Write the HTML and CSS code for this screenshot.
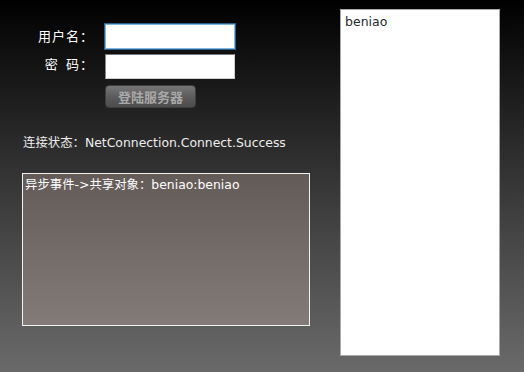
FILE: index.html
```html
<!DOCTYPE html>
<html lang="zh-CN">
<head>
    <meta charset="UTF-8">
    <meta name="viewport" content="width=device-width, initial-scale=1.0">
    <title>共享对象</title>
    <link rel="stylesheet" href="styles.css">
</head>
<body>
    <div class="page">
        <div class="left">
            <div class="login">
                <label class="label">用户名：</label>
                <input class="field focused" type="text">
                <label class="label">密 码：</label>
                <input class="field" type="password">
                <span></span>
                <button class="button">登陆服务器</button>
            </div>

            <div class="status">连接状态：NetConnection.Connect.Success</div>

            <div class="events">异步事件-&gt;共享对象：beniao:beniao</div>
        </div>

        <div class="users">beniao</div>
    </div>
</body>
</html>
```

FILE: styles.css
```css
body {
    margin: 0;
    height: 372px;
    overflow: hidden;
    font-family: "DejaVu Sans", "Noto Sans CJK SC", sans-serif;
    font-size: 12px;
    color: #fff;
    background: linear-gradient(#000 0%, #111 15%, #2c2c2c 40%, #4c4c4c 70%, #6a6a6a 100%);
}

.page {
    display: flex;
    padding: 9px 0 0 22px;
}

.left {
    width: 288px;
}

.login {
    display: grid;
    grid-template-columns: 72px 132px;
    column-gap: 10px;
    align-items: center;
    margin-top: 14px;
}

.label {
    text-align: right;
    white-space: pre;
    line-height: 16px;
    font-size: 13px;
    letter-spacing: 1px;
    word-spacing: 2px;
}

.field {
    box-sizing: border-box;
    width: 130px;
    height: 25px;
    margin: 4px 0 0 1px;
    border: 1px solid #d0d0d0;
    border-top-color: #777;
    border-left-color: #888;
    background: #fff;
    padding: 0 3px;
}

.field.focused {
    width: 132px;
    height: 27px;
    margin: 0;
    border: 1px solid #2c5f8c;
    box-shadow: inset 0 0 0 1px #7fb6e0;
}

.button {
    width: 91px;
    height: 23px;
    margin: 6px 0 0 1px;
    border: 1px solid #3e3e3e;
    border-radius: 4px;
    background: linear-gradient(#777 0%, #5c5c5c 50%, #4c4c4c 100%);
    color: #a9a9a9;
    font-family: "Noto Sans CJK SC", sans-serif;
    font-size: 13px;
    font-weight: bold;
    padding: 0;
}

.status {
    margin-top: 27px;
    line-height: 16px;
    font-size: 12.4px;
    color: #eee;
    padding-left: 1px;
}

.events {
    box-sizing: border-box;
    height: 153px;
    margin-top: 22px;
    border: 1px solid #f2f2f2;
    background: linear-gradient(#635b58, #837b78);
    padding: 3px 2px;
    line-height: 16px;
    font-size: 12.4px;
}

.users {
    box-sizing: border-box;
    width: 160px;
    height: 347px;
    margin-left: 30px;
    border: 1px solid #a9a9a9;
    background: #fff;
    color: #1c2a2a;
    padding: 4px 4px;
    line-height: 16px;
    font-size: 12.5px;
}
```
